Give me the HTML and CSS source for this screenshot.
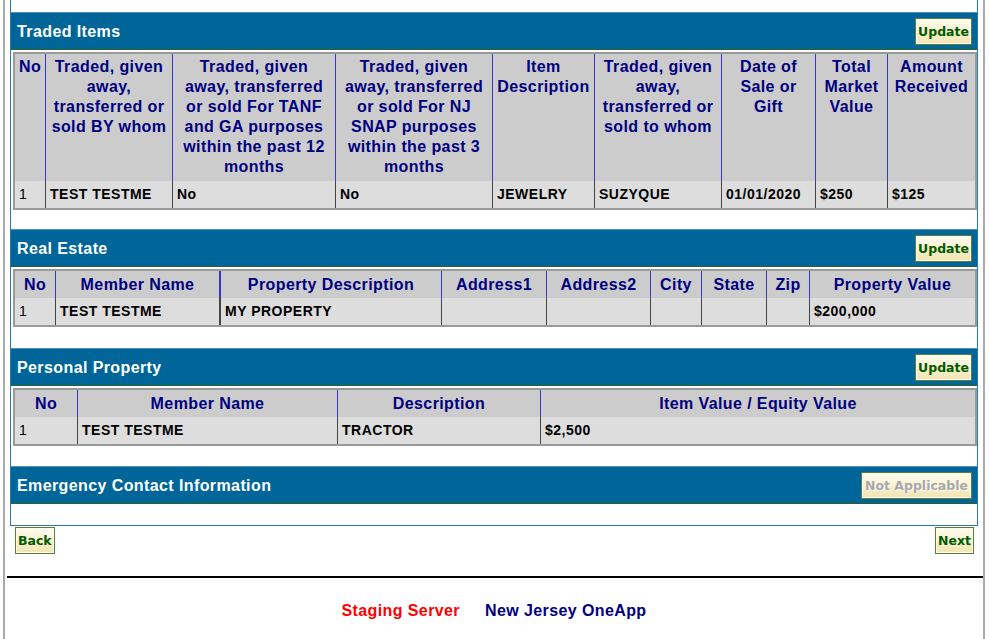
FILE: index.html
```html
<!DOCTYPE html>
<html>
<head>
<meta charset="utf-8">
<title>Resources Summary</title>
<link rel="stylesheet" href="styles.css">
</head>
<body>
<div class="page">
  <div class="box">
    <section class="sec sec-traded">
      <div class="sec-head">
        <span class="sec-title">Traded Items</span>
        <button class="btn" type="button">Update</button>
      </div>
      <table class="grid t-traded">
        <colgroup><col><col><col><col><col><col><col><col><col></colgroup>
        <thead>
          <tr>
            <th>No</th>
            <th>Traded, given away, transferred or sold BY whom</th>
            <th>Traded, given away, transferred or sold For TANF and GA purposes within the past 12 months</th>
            <th>Traded, given away, transferred or sold For NJ SNAP purposes within the past 3 months</th>
            <th>Item Description</th>
            <th>Traded, given away, transferred or sold to whom</th>
            <th>Date of Sale or Gift</th>
            <th>Total Market Value</th>
            <th>Amount Received</th>
          </tr>
        </thead>
        <tbody>
          <tr>
            <td class="num">1</td>
            <td>TEST TESTME</td>
            <td>No</td>
            <td>No</td>
            <td>JEWELRY</td>
            <td>SUZYQUE</td>
            <td>01/01/2020</td>
            <td>$250</td>
            <td>$125</td>
          </tr>
        </tbody>
      </table>
    </section>

    <section class="sec sec-real">
      <div class="sec-head">
        <span class="sec-title">Real Estate</span>
        <button class="btn" type="button">Update</button>
      </div>
      <table class="grid t-real">
        <colgroup><col><col><col><col><col><col><col><col><col></colgroup>
        <thead>
          <tr>
            <th>No</th>
            <th>Member Name</th>
            <th>Property Description</th>
            <th>Address1</th>
            <th>Address2</th>
            <th>City</th>
            <th>State</th>
            <th>Zip</th>
            <th>Property Value</th>
          </tr>
        </thead>
        <tbody>
          <tr>
            <td class="num">1</td>
            <td>TEST TESTME</td>
            <td>MY PROPERTY</td>
            <td></td>
            <td></td>
            <td></td>
            <td></td>
            <td></td>
            <td>$200,000</td>
          </tr>
        </tbody>
      </table>
    </section>

    <section class="sec">
      <div class="sec-head">
        <span class="sec-title">Personal Property</span>
        <button class="btn" type="button">Update</button>
      </div>
      <table class="grid t-personal">
        <colgroup><col><col><col><col></colgroup>
        <thead>
          <tr>
            <th>No</th>
            <th>Member Name</th>
            <th>Description</th>
            <th>Item Value / Equity Value</th>
          </tr>
        </thead>
        <tbody>
          <tr>
            <td class="num">1</td>
            <td>TEST TESTME</td>
            <td>TRACTOR</td>
            <td>$2,500</td>
          </tr>
        </tbody>
      </table>
    </section>

    <section class="sec sec-last">
      <div class="sec-head">
        <span class="sec-title">Emergency Contact Information</span>
        <button class="btn" type="button" disabled>Not Applicable</button>
      </div>
    </section>
  </div>

  <div class="nav">
    <button class="btn" type="button">Back</button>
    <button class="btn" type="button">Next</button>
  </div>

  <hr class="rule">

  <div class="footer">
    <span class="staging">Staging Server</span>
    <span class="app">New Jersey OneApp</span>
  </div>
</div>
</body>
</html>
```

FILE: styles.css
```css
html, body {
  margin: 0;
  padding: 0;
  background: #ffffff;
}

body {
  font-family: "Liberation Sans", Arial, sans-serif;
  letter-spacing: 0.4px;
  color: #000;
}

.page {
  margin-left: 3px;
  width: 978px;
  min-height: 639px;
  border-left: 2px solid #a9a9a9;
  border-right: 2px solid #a9a9a9;
  box-sizing: content-box;
}

.box {
  margin: 0 5px 0 5px;
  padding-top: 12px;
  border: 1px solid #2a7ab0;
  border-top: none;
}

.sec {
  padding-bottom: 20px;
}

.sec-traded {
  padding-bottom: 19px;
}

.sec-real {
  padding-bottom: 21px;
}

.sec-last {
  padding-bottom: 21px;
}

.sec-head {
  display: flex;
  align-items: center;
  justify-content: space-between;
  height: 36px;
  padding: 0 5px 0 6px;
  background: #006699;
  border-top: 1px solid #4f93bd;
  border-bottom: 1px solid #2f5f2a;
}

.sec-title {
  color: #ffffff;
  font-size: 16px;
  font-weight: bold;
  padding-top: 1px;
}

.btn {
  height: 27px;
  padding: 0 2px;
  margin: 0;
  font-family: "DejaVu Sans", Verdana, sans-serif;
  font-size: 12.5px;
  font-weight: bold;
  letter-spacing: 0;
  color: #005a00;
  background: linear-gradient(#fffdf0, #f1e4b0);
  border: 1px solid #5a7d3c;
  box-shadow: inset 0 0 0 1px #fffbe8;
  cursor: pointer;
}

.btn:disabled {
  padding: 0 3px;
  color: #a8a8a8;
  text-shadow: 1px 1px 0 #ffffff;
  cursor: default;
}

.grid {
  margin: 2px 0 0 2px;
  width: 964px;
  table-layout: fixed;
  border-collapse: separate;
  border-spacing: 0;
  border: 2px solid #9a9a9a;
}

.grid th {
  background: #cccccc;
  color: #000080;
  font-size: 16px;
  font-weight: bold;
  line-height: 20px;
  padding: 4px 4px 3px;
  text-align: center;
  vertical-align: top;
  border-left: 1px solid #3535c0;
}

.grid td {
  background: #dddddd;
  font-size: 14px;
  font-weight: bold;
  letter-spacing: 0.5px;
  line-height: 17px;
  padding: 5px 3px 5px 4px;
  height: 17px;
  white-space: nowrap;
  overflow: hidden;
  border-left: 1px solid #444444;
}

.grid th:first-child,
.grid td:first-child {
  border-left: none;
}

.grid td.num {
  font-weight: normal;
}

.t-traded th {
  padding: 3px 4px 4px;
}

/* Traded Items columns */
.t-traded col:nth-child(1) { width: 30px; }
.t-traded col:nth-child(2) { width: 127px; }
.t-traded col:nth-child(3) { width: 163px; }
.t-traded col:nth-child(4) { width: 157px; }
.t-traded col:nth-child(5) { width: 102px; }
.t-traded col:nth-child(6) { width: 127px; }
.t-traded col:nth-child(7) { width: 94px; }
.t-traded col:nth-child(8) { width: 72px; }
.t-traded col:nth-child(9) { width: 88px; }

.t-traded th:first-child {
  padding-left: 2px;
  padding-right: 2px;
}

/* Real Estate columns */
.t-real col:nth-child(1) { width: 40px; }
.t-real col:nth-child(2) { width: 164px; }
.t-real col:nth-child(3) { width: 222px; }
.t-real col:nth-child(4) { width: 105px; }
.t-real col:nth-child(5) { width: 104px; }
.t-real col:nth-child(6) { width: 51px; }
.t-real col:nth-child(7) { width: 65px; }
.t-real col:nth-child(8) { width: 43px; }
.t-real col:nth-child(9) { width: 166px; }

.t-real th {
  padding-left: 2px;
  padding-right: 2px;
}

.t-real th:nth-child(3),
.t-real td:nth-child(3) {
  border-left-width: 2px;
}

/* Personal Property columns */
.t-personal col:nth-child(1) { width: 62px; }
.t-personal col:nth-child(2) { width: 260px; }
.t-personal col:nth-child(3) { width: 203px; }
.t-personal col:nth-child(4) { width: 435px; }

.nav {
  display: flex;
  justify-content: space-between;
  padding: 1px 9px 0 10px;
}

.rule {
  margin: 22px 0 0 2px;
  height: 2px;
  border: none;
  background: #000000;
}

.footer {
  display: flex;
  justify-content: center;
  gap: 25px;
  margin-top: 23px;
  font-size: 16px;
  font-weight: bold;
  line-height: 20px;
}

.staging {
  color: #ff0000;
}

.app {
  color: #000080;
}
```
